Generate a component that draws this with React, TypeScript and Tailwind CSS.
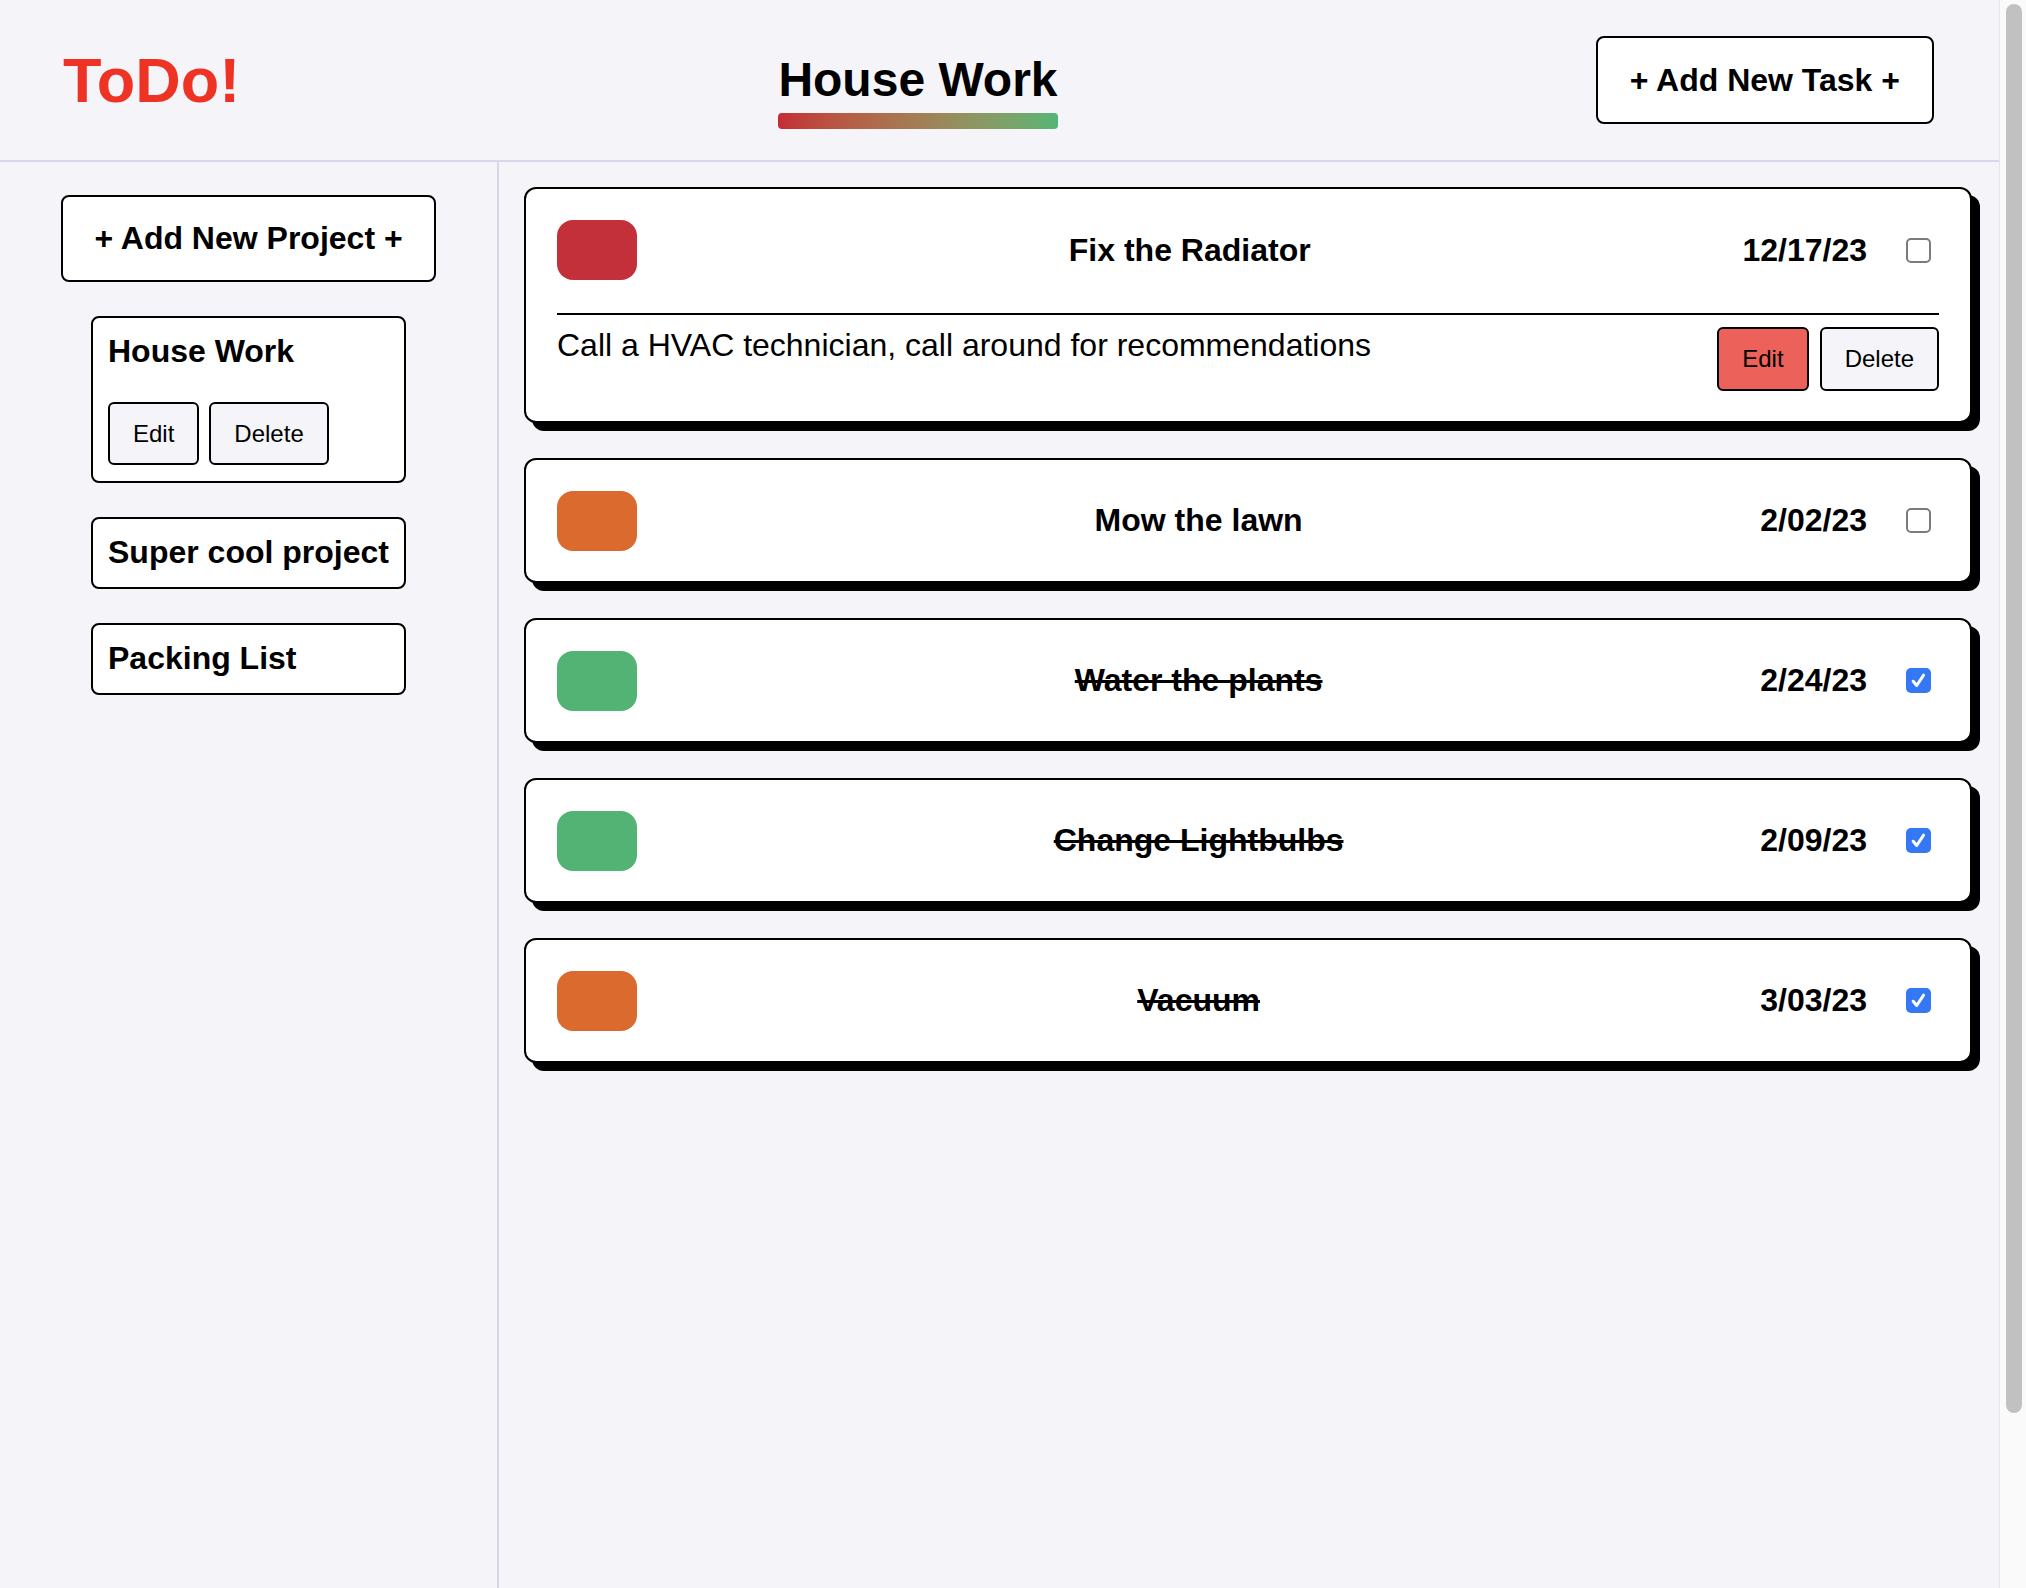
import React from 'react';

type Task = {
  title: string;
  date: string;
  color: string;
  done: boolean;
  description?: string;
};

const tasks: Task[] = [
  {
    title: 'Fix the Radiator',
    date: '12/17/23',
    color: 'bg-[#c4303a]',
    done: false,
    description: 'Call a HVAC technician, call around for recommendations',
  },
  { title: 'Mow the lawn', date: '2/02/23', color: 'bg-[#da6a2e]', done: false },
  { title: 'Water the plants', date: '2/24/23', color: 'bg-[#52b374]', done: true },
  { title: 'Change Lightbulbs', date: '2/09/23', color: 'bg-[#52b374]', done: true },
  { title: 'Vacuum', date: '3/03/23', color: 'bg-[#da6a2e]', done: true },
];

const projects = ['House Work', 'Super cool project', 'Packing List'];

function Checkbox({ checked }: { checked: boolean }) {
  if (checked) {
    return (
      <span className="ml-[39px] mr-[8px] flex h-[25px] w-[25px] items-center justify-center rounded-[5px] bg-[#3478f6]">
        <svg width="19" height="19" viewBox="0 0 16 16" fill="none">
          <path d="M3.5 8.6l3 3.6 5.8-8.7" stroke="#fff" strokeWidth="2.5" strokeLinecap="round" strokeLinejoin="round" />
        </svg>
      </span>
    );
  }
  return <span className="ml-[39px] mr-[8px] block h-[25px] w-[25px] rounded-[5px] border-2 border-[#7b7b7b] bg-white" />;
}

function SmallButton({ label, red }: { label: string; red?: boolean }) {
  return (
    <button
      className={
        red
          ? 'rounded-[6px] border-2 border-black bg-[#ec625b] px-[23px] py-[16px] text-[24px] leading-[1.15] text-black'
          : 'rounded-[6px] border-2 border-black bg-[#f4f4f9] px-[23px] py-[16px] text-[24px] leading-[1.15] text-black'
      }
    >
      {label}
    </button>
  );
}

function TaskCard({ task }: { task: Task }) {
  return (
    <div className="rounded-[12px] border-2 border-black bg-white px-[31px] pb-[30px] pt-[31px] shadow-[8px_8px_0_0_#000]">
      <div className="flex items-center">
        <div className={`h-[60px] w-[80px] rounded-[16px] ${task.color}`} />
        <div
          className={
            task.done
              ? 'flex-1 text-center text-[32px] font-bold leading-[1.15] line-through'
              : 'flex-1 text-center text-[32px] font-bold leading-[1.15]'
          }
        >
          {task.title}
        </div>
        <div className="text-[32px] font-bold leading-[1.15]">{task.date}</div>
        <Checkbox checked={task.done} />
      </div>
      {task.description && (
        <>
          <div className="mt-[33px] h-[2px] bg-black" />
          <div className="mt-[12px] flex items-start justify-between">
            <p className="text-[32px] leading-[1.15]">{task.description}</p>
            <div className="flex gap-[11px]">
              <SmallButton label="Edit" red />
              <SmallButton label="Delete" />
            </div>
          </div>
        </>
      )}
    </div>
  );
}

export default function App() {
  return (
    <div
      className="flex h-screen w-full overflow-hidden bg-[#f4f4f9] text-black"
      style={{ fontFamily: '"Liberation Sans", Arial, sans-serif' }}
    >
      <div className="flex min-w-0 flex-1 flex-col">
        {/* top bar */}
        <header className="flex h-[162px] shrink-0 items-center justify-between border-b-2 border-[#d9d8e8] pl-[63px] pr-[65px]">
          <h1 className="text-[63px] font-bold leading-[1.15] text-[#ee3325]">ToDo!</h1>
          <div className="mt-[25px] inline-flex flex-col">
            <h2 className="text-[48px] font-bold leading-none">House Work</h2>
            <div className="mt-[9px] h-[16px] w-full rounded-[4px] bg-gradient-to-r from-[#c32c36] to-[#52b675]" />
          </div>
          <button className="rounded-[8px] border-2 border-black bg-white px-[32px] py-[24px] text-[32px] font-bold leading-[1.15]">
            + Add New Task +
          </button>
        </header>

        <div className="flex min-h-0 flex-1">
          {/* projects */}
          <aside className="flex w-[499px] shrink-0 flex-col items-center gap-[34px] border-r-2 border-[#d9d8e8] pt-[33px]">
            <button className="rounded-[8px] border-2 border-black bg-white px-[31px] py-[23px] text-[32px] font-bold leading-[1.15]">
              + Add New Project +
            </button>
            {projects.map((name, i) => (
              <div key={name} className="w-[315px] rounded-[8px] border-2 border-black bg-white px-[15px] pb-[16px] pt-[15px]">
                <div className="whitespace-nowrap text-[32px] font-bold leading-[1.15]">{name}</div>
                {i === 0 && (
                  <div className="mt-[32px] flex gap-[10px]">
                    <button className="rounded-[6px] border-2 border-black bg-[#f4f4f9] px-[23px] py-[16px] text-[24px] leading-[1.15]">
                      Edit
                    </button>
                    <button className="rounded-[6px] border-2 border-black bg-[#f4f4f9] px-[23px] py-[16px] text-[24px] leading-[1.15]">
                      Delete
                    </button>
                  </div>
                )}
              </div>
            ))}
          </aside>

          {/* tasks */}
          <main className="flex flex-1 flex-col gap-[35px] pl-[25px] pr-[27px] pt-[25px]">
            {tasks.map((t) => (
              <TaskCard key={t.title} task={t} />
            ))}
          </main>
        </div>
      </div>

      {/* scrollbar */}
      <div className="w-[27px] shrink-0 border-l border-[#e6e6e6] bg-[#fafafa] px-[6px] pt-[4px]">
        <div className="h-[1409px] w-[16px] rounded-full bg-[#c1c1c1]" />
      </div>
    </div>
  );
}
